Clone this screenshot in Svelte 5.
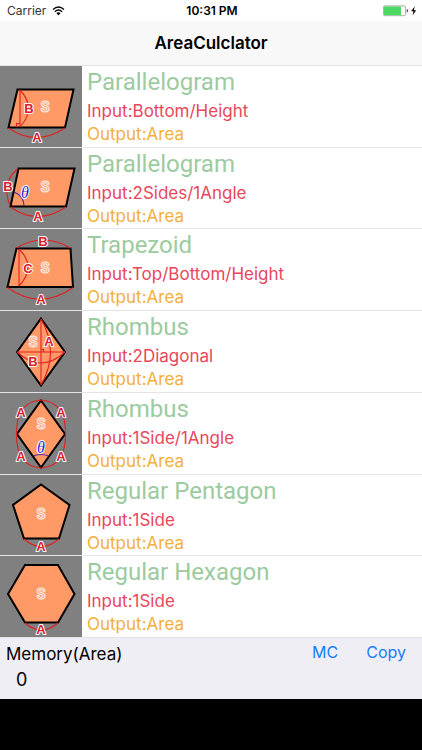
<script lang="ts">
  type Label = { text: string; x: number; y: number; kind: 'area' | 'side' | 'angle' }
  type Shape = {
    name: string
    input: string
    points: string
    arcs: string[]
    angle?: string
    labels: Label[]
  }

  const shapes: Shape[] = [
    {
      name: 'Parallelogram',
      input: 'Bottom/Height',
      points: '17.5,23.5 73.5,23.5 65,61.5 8.5,61.5',
      arcs: ['M8.5 62Q36 81 65 62', 'M20 24V61', 'M20 24Q37 42 20 61', 'M16.5 61V57.5H20'],
      labels: [
        { text: 'S', x: 45, y: 41, kind: 'area' },
        { text: 'B', x: 29, y: 42, kind: 'side' },
        { text: 'A', x: 37, y: 71, kind: 'side' },
      ],
    },
    {
      name: 'Parallelogram',
      input: '2Sides/1Angle',
      points: '18.5,20.5 74.5,20.5 66,58.5 10.5,58.5',
      arcs: ['M10.5 59Q37 78 66 59', 'M18 20.5Q1 34 10 58'],
      angle: 'M14 44Q24 48 24 58',
      labels: [
        { text: 'S', x: 45, y: 39, kind: 'area' },
        { text: 'B', x: 8, y: 38, kind: 'side' },
        { text: 'A', x: 38, y: 68, kind: 'side' },
        { text: 'θ', x: 25, y: 45, kind: 'angle' },
      ],
    },
    {
      name: 'Trapezoid',
      input: 'Top/Bottom/Height',
      points: '16.5,19.5 70.5,19.5 73,58 7.5,58',
      arcs: ['M16.5 19Q43 3 70.5 19', 'M7.5 58.5Q40 82 73 58.5', 'M19 20V57', 'M19 20Q37 38 19 57'],
      labels: [
        { text: 'S', x: 45, y: 39, kind: 'area' },
        { text: 'C', x: 28, y: 39, kind: 'side' },
        { text: 'B', x: 43, y: 12, kind: 'side' },
        { text: 'A', x: 41, y: 70, kind: 'side' },
      ],
    },
    {
      name: 'Rhombus',
      input: '2Diagonal',
      points: '41,7.5 65,41 41,74.5 17,41',
      arcs: ['M41 8V74', 'M17 41H65', 'M41 8Q60 41 41 74', 'M17 41Q41 63 65 41', 'M41 38.5H43.5V41'],
      labels: [
        { text: 'S', x: 33, y: 31, kind: 'area' },
        { text: 'A', x: 49, y: 30, kind: 'side' },
        { text: 'B', x: 33, y: 50, kind: 'side' },
      ],
    },
    {
      name: 'Rhombus',
      input: '1Side/1Angle',
      points: '41,7.5 65,41 41,74.5 17,41',
      arcs: ['M41 7Q16 9 16.5 41Q16 73 41 75Q66 73 65.5 41Q66 9 41 7'],
      angle: 'M33.5 63Q41 60 48.5 63',
      labels: [
        { text: 'S', x: 41, y: 31, kind: 'area' },
        { text: 'A', x: 21, y: 19, kind: 'side' },
        { text: 'A', x: 61, y: 19, kind: 'side' },
        { text: 'A', x: 21, y: 63, kind: 'side' },
        { text: 'A', x: 61, y: 63, kind: 'side' },
        { text: 'θ', x: 41, y: 55, kind: 'angle' },
      ],
    },
    {
      name: 'Regular Pentagon',
      input: '1Side',
      points: '41,9.5 69.5,30 59,63.5 24,63.5 13,30',
      arcs: ['M24 64Q41 79 59 64'],
      labels: [
        { text: 'S', x: 41, y: 39, kind: 'area' },
        { text: 'A', x: 41, y: 71, kind: 'side' },
      ],
    },
    {
      name: 'Regular Hexagon',
      input: '1Side',
      points: '25,9 58,9 74.5,38 58,66.5 25,66.5 8,38',
      arcs: ['M25 67Q41 81 58 67'],
      labels: [
        { text: 'S', x: 41, y: 38, kind: 'area' },
        { text: 'A', x: 41, y: 73, kind: 'side' },
      ],
    },
  ]

  let memory = $state(0)

  function clearMemory() {
    memory = 0
  }

  function copyMemory() {
    navigator.clipboard?.writeText(String(memory))
  }
</script>

<div class="screen">
  <div class="status">
    <div class="carrier">
      <span>Carrier</span>
      <svg width="13" height="10" viewBox="0 0 13 10" aria-hidden="true">
        <path d="M1 3.6Q6.5-1.4 12 3.6M2.9 5.7Q6.5 2.5 10.1 5.7" fill="none" stroke="#000" stroke-width="1.4" />
        <path d="M4.4 7.1Q6.5 5.3 8.6 7.1L6.5 9.4Z" />
      </svg>
    </div>
    <span class="time">10:31 PM</span>
    <div class="battery">
      <svg width="34" height="12" viewBox="0 0 34 12" aria-hidden="true">
        <rect x="0.5" y="0.9" width="22" height="9.8" rx="1.2" fill="#fff" stroke="#9a9a9a" stroke-width="0.8" />
        <rect x="1" y="1.4" width="17" height="8.8" fill="#4cd964" />
        <path d="M23.7 4.1Q25.2 4.4 25.2 5.8T23.7 7.5Z" fill="#555" />
        <path d="M31.8 1.2L28.1 6.3H30.5L29.5 10.4L33.2 5.2H30.8Z" />
      </svg>
    </div>
  </div>

  <header>
    <h1>AreaCulclator</h1>
  </header>

  <ul>
    {#each shapes as shape}
      <li>
        <button type="button" class="row">
          <span class="thumb">
            <svg width="82" height="80" viewBox="0 0 82 80" aria-hidden="true">
              <polygon points={shape.points} />
              {#each shape.arcs as d}
                <path class="arc" {d} />
              {/each}
              {#if shape.angle}
                <path class="arc angle-arc" d={shape.angle} />
              {/if}
              {#each shape.labels as label}
                <text class={label.kind} x={label.x} y={label.y} dy="5">{label.text}</text>
              {/each}
            </svg>
          </span>
          <span class="content">
            <span class="name">{shape.name}</span>
            <span class="input">Input:{shape.input}</span>
            <span class="output">Output:Area</span>
          </span>
        </button>
      </li>
    {/each}
  </ul>

  <footer>
    <div class="memory">
      <span>Memory(Area)</span>
      <output>{memory}</output>
    </div>
    <button type="button" onclick={clearMemory}>MC</button>
    <button type="button" onclick={copyMemory}>Copy</button>
  </footer>
</div>

<style>
  :global(body) {
    margin: 0;
    background: #000;
  }
  .screen {
    display: flex;
    flex-direction: column;
    min-height: 100vh;
    padding-bottom: 51px;
    box-sizing: border-box;
    font-family: Inter, Roboto, sans-serif;
    color: #000;
  }
  .status {
    display: grid;
    grid-template-columns: 1fr auto 1fr;
    align-items: center;
    height: 21px;
    padding: 0 5px 0 7px;
    background: #fff;
    font-size: 12px;
  }
  .carrier {
    display: flex;
    align-items: center;
    gap: 6px;
    color: #333;
  }
  .time {
    font-weight: 600;
  }
  .battery {
    display: flex;
    justify-content: flex-end;
  }
  header {
    display: flex;
    align-items: center;
    justify-content: center;
    height: 44px;
    background: #f8f8f8;
    border-bottom: 1px solid #e4e4e8;
  }
  h1 {
    margin: 0;
    font-size: 17px;
    font-weight: 600;
  }
  ul {
    flex: 1;
    display: grid;
    grid-auto-rows: 1fr;
    margin: 0;
    padding: 0;
    list-style: none;
    background: #fff;
  }
  li {
    display: flex;
  }
  button {
    padding: 0;
    border: none;
    background: transparent;
    font-family: inherit;
    cursor: pointer;
  }
  .row {
    display: flex;
    width: 100%;
    text-align: left;
    border-bottom: 1px solid #e4e4e8;
  }
  .thumb {
    flex: none;
    display: flex;
    align-self: stretch;
    background: #808080;
  }
  polygon {
    fill: #ff9966;
    stroke: #000;
    stroke-width: 2;
  }
  .arc {
    fill: none;
    stroke: #e02020;
    stroke-width: 1.1;
  }
  .angle-arc {
    stroke: #4420b0;
  }
  text {
    text-anchor: middle;
    paint-order: stroke;
    font-size: 13px;
    font-weight: 600;
    stroke: #fff;
    stroke-width: 2;
    stroke-linejoin: round;
  }
  .area {
    paint-order: normal;
    font-size: 14px;
    font-weight: 700;
    fill: #ff9966;
    stroke: #fff0e8;
    stroke-width: 1;
  }
  .side {
    fill: #d8202c;
    font-family: 'Liberation Sans', sans-serif;
  }
  .angle {
    fill: #1c1cd8;
    font-family: 'Liberation Serif', serif;
    font-size: 16px;
    font-weight: 400;
    font-style: italic;
  }
  .content {
    display: flex;
    flex-direction: column;
    padding-left: 5px;
  }
  .name {
    font-family: Roboto, sans-serif;
    font-size: 24px;
    line-height: 33px;
    color: #9ccb9f;
  }
  .input {
    font-size: 17px;
    line-height: 24px;
    color: #e8475c;
  }
  .output {
    font-size: 17px;
    line-height: 23px;
    color: #f3b038;
  }
  footer {
    display: flex;
    align-items: flex-start;
    gap: 28px;
    padding: 3px 16px 6px 6px;
    background: #efeef4;
  }
  .memory {
    flex: 1;
    display: flex;
    flex-direction: column;
    font-size: 17px;
    line-height: 26px;
  }
  output {
    padding-left: 10px;
    font-size: 18px;
  }
  footer button {
    font-size: 16px;
    line-height: 22px;
    color: #157efb;
  }
</style>
